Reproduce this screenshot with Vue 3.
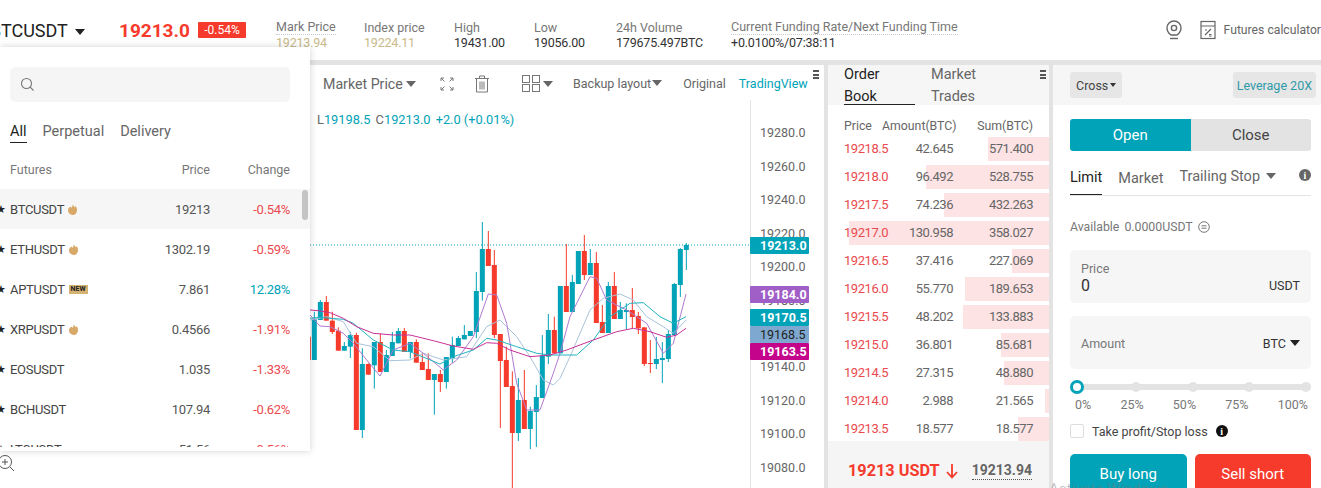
<script setup>
const stats = [
  { label: 'Mark Price', value: '19213.94', gold: true, dotted: true },
  { label: 'Index price', value: '19224.11', gold: true },
  { label: 'High', value: '19431.00' },
  { label: 'Low', value: '19056.00' },
  { label: '24h Volume', value: '179675.497BTC' },
  { label: 'Current Funding Rate/Next Funding Time', value: '+0.0100%/07:38:11', dotted: true }
];

const futures = [
  { name: 'BTCUSDT', tag: 'hot', price: '19213', change: '-0.54%', active: true },
  { name: 'ETHUSDT', tag: 'hot', price: '1302.19', change: '-0.59%' },
  { name: 'APTUSDT', tag: 'new', price: '7.861', change: '12.28%', up: true },
  { name: 'XRPUSDT', tag: 'hot', price: '0.4566', change: '-1.91%' },
  { name: 'EOSUSDT', price: '1.035', change: '-1.33%' },
  { name: 'BCHUSDT', price: '107.94', change: '-0.62%' },
  { name: 'LTCUSDT', price: '51.56', change: '-0.56%' }
];

const asks = [
  ['19218.5', '42.645', '571.400', 61],
  ['19218.0', '96.492', '528.755', 123],
  ['19217.5', '74.236', '432.263', 105],
  ['19217.0', '130.958', '358.027', 200],
  ['19216.5', '37.416', '227.069', 37],
  ['19216.0', '55.770', '189.653', 84],
  ['19215.5', '48.202', '133.883', 86],
  ['19215.0', '36.801', '85.681', 48],
  ['19214.5', '27.315', '48.880', 45],
  ['19214.0', '2.988', '21.565', 4],
  ['19213.5', '18.577', '18.577', 31]
];

const marks = ['0%', '25%', '50%', '75%', '100%'];

// candle values were read off a 3x crop, so convert them to chart pixels here
const CHART_TOP = 100;
const toY = (v) => 210 - CHART_TOP + v / 3;
const toX = (v) => 310 + v / 3;

// [x, bodyTop, bodyBottom, wickTop, wickBottom, up]
const rawCandles = [
  [-5, 380, 450, 370, 450, 0], [13, 328, 450, 305, 450, 1], [31, 276, 330, 270, 330, 1],
  [49, 276, 332, 258, 332, 0], [67, 332, 366, 305, 372, 0], [85, 362, 422, 352, 422, 0],
  [103, 408, 422, 396, 422, 1], [121, 375, 410, 365, 444, 1], [139, 375, 660, 368, 660, 0],
  [157, 462, 660, 415, 684, 1], [175, 462, 494, 460, 494, 0], [193, 396, 466, 396, 536, 1],
  [211, 396, 486, 370, 486, 0], [229, 435, 486, 420, 486, 1], [247, 396, 438, 366, 438, 1],
  [265, 363, 400, 354, 400, 1], [283, 363, 426, 354, 426, 0], [301, 396, 426, 396, 445, 1],
  [319, 396, 458, 388, 458, 0], [337, 456, 480, 430, 480, 0], [355, 477, 510, 430, 510, 0],
  [373, 492, 510, 492, 614, 1], [391, 492, 516, 480, 546, 0], [409, 441, 516, 441, 536, 1],
  [427, 405, 444, 380, 458, 1], [445, 384, 408, 378, 408, 1], [463, 375, 388, 345, 388, 1],
  [481, 363, 378, 363, 378, 1], [499, 243, 366, 186, 384, 1], [517, 117, 246, 36, 272, 1],
  [535, 117, 168, 63, 168, 0], [553, 165, 375, 120, 384, 0], [571, 372, 453, 372, 654, 0],
  [589, 450, 531, 410, 531, 0], [607, 528, 669, 484, 834, 0], [625, 570, 669, 504, 693, 1],
  [643, 570, 657, 480, 657, 0], [661, 603, 657, 590, 717, 1], [679, 561, 606, 525, 711, 1],
  [697, 437, 564, 375, 564, 1], [715, 360, 440, 312, 462, 1], [733, 360, 430, 320, 430, 0],
  [751, 228, 430, 228, 430, 1], [769, 228, 306, 102, 306, 0], [787, 216, 306, 195, 306, 1],
  [805, 123, 222, 123, 222, 1], [823, 123, 195, 75, 210, 0], [841, 159, 195, 117, 195, 1],
  [859, 159, 339, 126, 339, 0], [877, 336, 369, 285, 369, 0], [895, 228, 369, 216, 369, 1],
  [913, 228, 327, 186, 327, 0], [931, 300, 327, 276, 327, 1], [949, 300, 306, 280, 357, 1],
  [967, 300, 321, 234, 357, 0], [985, 318, 355, 306, 372, 0], [1003, 352, 462, 352, 468, 0],
  [1021, 459, 461, 390, 489, 0], [1039, 447, 462, 381, 477, 1], [1057, 444, 450, 396, 519, 1],
  [1075, 372, 447, 360, 456, 1], [1093, 222, 375, 219, 375, 1], [1111, 117, 225, 114, 261, 1],
  [1129, 105, 120, 99, 180, 1]
];

const candles = rawCandles.map(([x, top, bottom, wickTop, wickBottom, up]) => ({
  x: toX(x),
  top: toY(top),
  height: Math.max((bottom - top) / 3, 1),
  wickTop: toY(wickTop),
  wickBottom: toY(wickBottom),
  color: up ? '#00a3b8' : '#f63a2b'
}));

const line = (pts) => pts.map(([x, y]) => `${toX(x).toFixed(1)},${toY(y).toFixed(1)}`).join(' ');

const maLines = [
  {
    color: '#a9c3dc',
    points: line([[0, 330], [50, 320], [100, 335], [140, 400], [190, 410], [240, 452], [300, 450], [340, 430], [400, 450], [470, 440], [530, 350], [570, 330], [620, 380], [660, 440], [700, 510], [730, 525], [750, 505], [780, 440], [840, 300], [880, 265], [930, 252], [970, 270], [1010, 320], [1060, 350], [1090, 370], [1128, 330]])
  },
  {
    color: '#b07ad0',
    points: line([[0, 315], [30, 348], [60, 350], [100, 370], [130, 400], [170, 450], [210, 498], [250, 420], [300, 400], [340, 430], [400, 480], [440, 450], [490, 380], [535, 252], [560, 255], [590, 340], [620, 520], [650, 600], [690, 600], [730, 490], [750, 430], [780, 320], [840, 200], [860, 205], [890, 270], [950, 300], [1010, 340], [1060, 430], [1090, 400], [1128, 252]])
  },
  {
    color: '#21b3bf',
    points: line([[0, 325], [30, 322], [60, 325], [100, 328], [130, 340], [190, 390], [250, 420], [300, 425], [390, 462], [430, 440], [490, 420], [530, 385], [560, 390], [620, 410], [680, 430], [720, 435], [800, 435], [850, 390], [900, 320], [960, 280], [1000, 278], [1050, 320], [1090, 340], [1128, 320]])
  },
  {
    color: '#c9309a',
    points: line([[0, 300], [25, 302], [60, 308], [100, 325], [140, 350], [190, 370], [250, 375], [300, 375], [370, 392], [430, 408], [490, 418], [530, 398], [560, 400], [600, 420], [660, 440], [720, 435], [770, 420], [850, 390], [920, 365], [970, 355], [1020, 365], [1070, 382], [1100, 375], [1128, 355]])
  }
];

const axisLabels = [
  ['19280.0', 33], ['19260.0', 67], ['19240.0', 100], ['19220.0', 134], ['19200.0', 167],
  ['19180.0', 201], ['19140.0', 267], ['19120.0', 301], ['19100.0', 334], ['19080.0', 368]
];

const priceTags = [
  { text: '19213.0', y: 137, fill: '#00a3b8', color: '#fff', bold: true },
  { text: '19184.0', y: 186, fill: '#a05fc6', color: '#fff', bold: true },
  { text: '19170.5', y: 209, fill: '#00a3b8', color: '#fff', bold: true },
  { text: '19168.5', y: 226, fill: '#7ea8cf', color: '#222' },
  { text: '19163.5', y: 243, fill: '#c4058c', color: '#fff', bold: true }
];
</script>

<template>
  <div class="page">
    <header class="topbar">
      <div class="symbol">BTCUSDT <span class="caret caret-lg"></span></div>
      <div class="last-price">19213.0</div>
      <div class="last-change">-0.54%</div>
      <div class="stats">
        <div v-for="s in stats" :key="s.label" class="stat">
          <span class="stat-label" :class="{ dotted: s.dotted }">{{ s.label }}</span>
          <span class="stat-value" :class="{ gold: s.gold }">{{ s.value }}</span>
        </div>
      </div>
      <div class="top-actions">
        <svg class="pin" width="20" height="22" viewBox="0 0 20 22" fill="none" stroke="#666" stroke-width="1.4">
          <path d="M10 2a7 7 0 0 1 7 7c0 3-2 5.500-4 7H7c-2-1.500-4-4-4-7a7 7 0 0 1 7-7z" />
          <circle cx="10" cy="9" r="2.600" />
          <path d="M6 19.500h8" />
        </svg>
        <svg width="16" height="20" viewBox="0 0 16 20" fill="none" stroke="#666" stroke-width="1.200">
          <rect x="1" y="1.500" width="14" height="17" />
          <path d="M1 6h14M5 15l6-6M5 10h2M9 14.500h2.500M9 16h2.500" />
        </svg>
        <span class="calc">Futures calculator</span>
      </div>
    </header>

    <main class="workspace">
      <section class="chart-panel">
        <div class="chart-toolbar">
          <span class="tool-big">Market Price <span class="caret"></span></span>
          <svg class="tool-expand" width="14" height="14" viewBox="0 0 14 14" fill="none" stroke="#777" stroke-width="1">
            <path d="M1 4V1h3M1 1l3.500 3.500M10 1h3v3M13 1L9.500 4.500M1 10v3h3M1 13l3.500-3.500M13 10v3h-3M13 13L9.500 9.500" />
          </svg>
          <svg class="tool-trash" width="16" height="18" viewBox="0 0 16 18" fill="none" stroke="#777" stroke-width="1">
            <path d="M1 3.500h14M5.500 3.500V1h5v2.500M2.500 3.500V17h11V3.500M6 6.500v8M8 6.500v8M10 6.500v8" />
          </svg>
          <svg class="tool-layout" width="18" height="17" viewBox="0 0 18 17" fill="none" stroke="#777" stroke-width="1">
            <rect x="0.500" y="0.500" width="7" height="7" />
            <rect x="10.500" y="0.500" width="7" height="7" />
            <rect x="0.500" y="9.500" width="7" height="7" />
            <rect x="10.500" y="9.500" width="7" height="7" />
          </svg>
          <span class="caret tool-layout-caret"></span>
          <span class="tool-text tool-backup">Backup layout<span class="caret caret-tight"></span></span>
          <span class="tool-text tool-original">Original</span>
          <span class="tool-text tool-tv">TradingView</span>
          <span class="menu-dots tool-dots"><i></i><i></i><i></i></span>
        </div>
        <div class="chart-area">
          <svg class="chart" width="824" height="388" viewBox="0 0 824 388">
            <line x1="310" y1="145" x2="750" y2="145" stroke="#00a3b8" stroke-width="1" stroke-dasharray="1 2" />
            <line x1="750.500" y1="0" x2="750.500" y2="388" stroke="#e4e4e4" stroke-width="1" />
            <g v-for="(c, i) in candles" :key="i">
              <line :x1="c.x" :x2="c.x" :y1="c.wickTop" :y2="c.wickBottom" :stroke="c.color" stroke-width="1" />
              <rect :x="c.x - 2.500" :y="c.top" width="5" :height="c.height" :fill="c.color" />
            </g>
            <polyline v-for="m in maLines" :key="m.color" :points="m.points" fill="none" :stroke="m.color" stroke-width="1" />
            <text v-for="a in axisLabels" :key="a[0]" x="760" :y="a[1] + 4" class="axis-text">{{ a[0] }}</text>
            <g v-for="t in priceTags" :key="t.text">
              <rect x="750" :y="t.y" width="59" height="17" rx="1" :fill="t.fill" />
              <text x="760" :y="t.y + 13" class="tag-text" :class="{ 'tag-bold': t.bold }" :fill="t.color">{{ t.text }}</text>
            </g>
          </svg>
          <div class="legend"><span class="legend-k">L</span>19198.5 <span class="legend-k legend-gap">C</span>19213.0 <span class="legend-gap">+2.0 (+0.01%)</span></div>
          <svg class="zoom-icon" width="20" height="20" viewBox="0 0 20 20" fill="none" stroke="#555" stroke-width="1">
            <circle cx="5" cy="7" r="6.500" />
            <path d="M2 7h6M5 4v6M10 12l4 4" />
          </svg>
        </div>
      </section>

      <section class="book-panel">
        <div class="book-tabs">
          <div class="book-tab active">Order<br />Book</div>
          <div class="book-tab">Market<br />Trades</div>
          <span class="menu-dots book-dots"><i></i><i></i><i></i></span>
        </div>
        <div class="book-head">
          <span>Price</span>
          <span class="num">Amount(BTC)</span>
          <span class="num">Sum(BTC)</span>
        </div>
        <div class="book-rows">
          <div v-for="row in asks" :key="row[0]" class="book-row">
            <div class="depth" :style="{ width: row[3] + 'px' }"></div>
            <span class="ask">{{ row[0] }}</span>
            <span class="num">{{ row[1] }}</span>
            <span class="num">{{ row[2] }}</span>
          </div>
        </div>
        <div class="book-foot">
          <span class="foot-price">19213 USDT</span>
          <svg width="12" height="16" viewBox="0 0 12 16" fill="none" stroke="#f63a2b" stroke-width="1.800">
            <path d="M6 1v13M1 9l5 5.500L11 9" />
          </svg>
          <span class="foot-mark">19213.94</span>
        </div>
      </section>

      <section class="trade-panel">
        <div class="trade-top">
          <div class="cross">Cross<span class="caret caret-sm"></span></div>
          <div class="leverage">Leverage 20X</div>
        </div>
        <div class="trade-body">
          <div class="open-close">
            <div class="oc oc-open">Open</div>
            <div class="oc oc-close">Close</div>
          </div>
          <div class="order-tabs">
            <span class="order-tab active">Limit</span>
            <span class="order-tab">Market</span>
            <span class="order-tab trailing">Trailing Stop <span class="caret"></span></span>
            <span class="info info-gray">i</span>
          </div>
          <div class="available">
            <span>Available</span>
            <span>0.0000USDT</span>
            <svg width="12" height="12" viewBox="0 0 12 12" fill="none" stroke="#666" stroke-width="0.900">
              <circle cx="6" cy="6" r="5.300" />
              <path d="M3.500 4.800h5M3.500 7.200h5" />
            </svg>
          </div>
          <div class="field field-price">
            <div class="field-label">Price</div>
            <div class="field-row">
              <span class="field-value">0</span>
              <span class="field-unit">USDT</span>
            </div>
          </div>
          <div class="field field-amount">
            <span class="field-label">Amount</span>
            <span class="field-unit">BTC <span class="caret caret-dark"></span></span>
          </div>
          <div class="slider">
            <span class="knob"></span>
            <span class="stop"></span>
            <span class="stop"></span>
            <span class="stop"></span>
            <span class="stop"></span>
          </div>
          <div class="marks">
            <span v-for="m in marks" :key="m">{{ m }}</span>
          </div>
          <div class="tpsl">
            <span class="checkbox"></span>
            <span>Take profit/Stop loss</span>
            <span class="info info-dark">i</span>
          </div>
          <div class="actions">
            <div class="btn btn-buy">Buy long</div>
            <div class="btn btn-sell">Sell short</div>
          </div>
        </div>
      </section>
    </main>

    <!-- contract picker dropdown, sits over the chart -->
    <div class="picker">
      <div class="search">
        <svg width="15" height="15" viewBox="0 0 15 15" fill="none" stroke="#777" stroke-width="1.100">
          <circle cx="6.500" cy="6.500" r="5" />
          <path d="M10.200 10.200L13.500 13.500" />
        </svg>
      </div>
      <div class="picker-tabs">
        <span class="picker-tab active">All</span>
        <span class="picker-tab">Perpetual</span>
        <span class="picker-tab">Delivery</span>
      </div>
      <div class="picker-head">
        <span>Futures</span>
        <span class="right">Price</span>
        <span class="right">Change</span>
      </div>
      <div class="picker-list">
        <div v-for="f in futures" :key="f.name" class="picker-row" :class="{ active: f.active }">
          <span class="name">
            <span class="star">★</span>{{ f.name }}
            <svg v-if="f.tag === 'hot'" class="flame" width="9" height="11" viewBox="0 0 9 11">
              <path d="M4.800 0c.4 1.600 1.200 2.200 2 3.200.5-.4.600-.9.600-1.300C8.400 3 9 4.300 9 6c0 3-2 5-4.500 5S0 9 0 6.300C0 3.800 2.200 3 2.800 2.600c.2.500.3.900.7 1.200C4.300 3 4.900 1.500 4.800 0z" fill="#d8a868" />
            </svg>
            <span v-if="f.tag === 'new'" class="new-tag">NEW</span>
          </span>
          <span class="right price">{{ f.price }}</span>
          <span class="right" :class="f.up ? 'up' : 'down'">{{ f.change }}</span>
        </div>
      </div>
      <div class="scroll-thumb"></div>
    </div>

    <div class="watermark">Activate Windows</div>
  </div>
</template>

<style>
html, body, #app { margin: 0; padding: 0; height: 100%; overflow: hidden; background: #fff; }
</style>

<style scoped>
.page { position: relative; width: 1321px; height: 488px; overflow: hidden; background: #fff; font-family: Roboto, "Noto Sans", sans-serif; color: #555; }

.caret { display: inline-block; width: 0; height: 0; border-left: 5px solid transparent; border-right: 5px solid transparent; border-top: 6px solid #666; vertical-align: 2px; }
.caret-lg { border-top-color: #222; margin-left: 3px; }
.caret-sm { border-left-width: 3px; border-right-width: 3px; border-top-width: 4px; border-top-color: #333; margin-left: 2px; }
.caret-tight { margin-left: 1px; }
.caret-dark { border-top-color: #222; }

/* top bar */
.topbar { display: flex; align-items: center; height: 60px; }
.symbol { width: 129px; margin-left: -10px; flex: none; font-size: 18px; color: #222; white-space: nowrap; }
.last-price { font-size: 19px; font-weight: 700; color: #f63a2b; width: 79px; flex: none; }
.last-change { width: 48px; height: 16px; line-height: 16px; text-align: center; flex: none; background: #f63a2b; color: #fff; font-size: 12px; border-radius: 1px; }
.stats { display: grid; grid-template-columns: 88px 90px 80px 82px 115px auto; margin-left: 30px; margin-top: 10px; }
.stat { display: flex; flex-direction: column; font-size: 12.500px; line-height: 15px; }
.stat-label { color: #777; align-self: flex-start; white-space: nowrap; }
.stat-label.dotted { border-bottom: 1px dotted #ccc; line-height: 14px; }
.stat-value { color: #333; white-space: nowrap; letter-spacing: -0.200px; }
.stat-value.gold { color: #c9b98a; }
.top-actions { display: flex; align-items: center; margin-left: auto; gap: 16px; margin-right: 0; }
.calc { font-size: 12.200px; color: #666; margin-left: -8px; white-space: nowrap; }

/* main */
.workspace { display: grid; grid-template-columns: 824px 221px 268px; column-gap: 4px; height: 428px; background: #e3e3e3; padding-top: 5px; box-sizing: border-box; }

.chart-panel { background: #fff; }
.chart-toolbar { display: flex; align-items: center; height: 35px; box-sizing: border-box; padding: 2px 0 0 323px; position: relative; }
.tool-big { font-size: 14.200px; color: #666; white-space: nowrap; width: 117px; }
.tool-expand { margin-right: 20px; }
.tool-trash { margin-right: 32px; }
.tool-layout-caret { margin-left: 3px; margin-right: 20px; }
.tool-text { font-size: 12.500px; color: #666; white-space: nowrap; }
.tool-original { margin-left: 21px; }
.tool-tv { margin-left: 13px; color: #00a3b8; }
.menu-dots { display: flex; flex-direction: column; gap: 1.500px; width: 6px; }
.menu-dots i { display: block; height: 2px; background: #555; }
.tool-dots { position: absolute; top: 5px; left: 813px; }

.chart-area { position: relative; height: 388px; }
.chart { display: block; }
.axis-text { font-size: 12.500px; fill: #666; font-family: Roboto, sans-serif; }
.tag-text { font-size: 12.500px; font-family: Roboto, sans-serif; }
.tag-bold { font-weight: 700; }
.legend { position: absolute; left: 317px; top: 12px; font-size: 12.800px; color: #00a3b8; white-space: nowrap; }
.legend-k { color: #666; }
.legend-gap { margin-left: 2px; }
.zoom-icon { position: absolute; left: 0; top: 355px; }

/* order book */
.book-panel { background: #fff; display: flex; flex-direction: column; }
.book-tabs { position: relative; display: flex; height: 40px; background: #f6f6f6; padding-left: 16px; font-size: 14.500px; line-height: 22px; gap: 16px; box-sizing: border-box; }
.book-tab { width: 71px; color: #666; margin-top: -1px; height: 41px; }
.book-tab.active { color: #222; border-bottom: 1px solid #222; height: 40px; }
.book-dots { position: absolute; top: 5px; right: 3px; }
.book-head { display: grid; grid-template-columns: 38px 73px 78px; padding: 13px 16px 0; height: 17px; font-size: 12.300px; color: #666; line-height: 17px; white-space: nowrap; }
.num { text-align: right; }
.book-rows { display: flex; flex-direction: column; gap: 4px; margin-top: 2px; }
.book-row { position: relative; display: grid; grid-template-columns: 52px 57px 80px; padding: 0 16px; height: 24px; line-height: 24px; font-size: 13px; letter-spacing: -0.450px; color: #666; }
.book-row span { position: relative; }
.depth { position: absolute; top: 0; right: 0; bottom: 0; background: #fde3e3; }
.ask { color: #ea4a4f; }
.book-foot { display: flex; align-items: center; gap: 6px; height: 47px; background: #f5f5f5; padding: 12px 0 0 20px; box-sizing: border-box; }
.foot-price { font-size: 16.300px; font-weight: 700; color: #f63a2b; white-space: nowrap; }
.foot-mark { margin-left: 8px; font-size: 14px; font-weight: 700; color: #666; border-bottom: 1px dotted #555; line-height: 17px; }

/* trade form */
.trade-panel { background: #fff; }
.trade-top { display: flex; align-items: center; justify-content: space-between; height: 40px; background: #f6f6f6; padding: 0 5px 0 17px; box-sizing: border-box; }
.cross { display: flex; align-items: center; height: 26px; padding: 0 6px; background: #e6e6e6; border-radius: 3px; font-size: 12.500px; color: #444; }
.leverage { height: 26px; line-height: 27px; padding: 0 4px; background: #e6e6e6; border-radius: 3px; font-size: 12.500px; color: #2f9aa8; }
.trade-body { padding: 14px 10px 0 17px; }
.open-close { display: flex; height: 32px; border-radius: 3px; overflow: hidden; font-size: 15px; line-height: 32px; text-align: center; }
.oc { flex: 1; }
.oc-open { background: #00a3b8; color: #fff; }
.oc-close { background: #e3e3e3; color: #444; }
.order-tabs { display: flex; align-items: center; height: 44px; border-bottom: 1px solid #e3e3e3; font-size: 14.500px; color: #666; position: relative; }
.order-tab { height: 43px; line-height: 54px; margin-right: 16px; white-space: nowrap; }
.order-tab.active { color: #222; border-bottom: 1px solid #222; }
.order-tab.trailing { line-height: 50px; }
.order-tab.trailing .caret { margin-left: 2px; }
.info { position: absolute; display: flex; align-items: center; justify-content: center; border-radius: 50%; color: #fff; font-family: "Liberation Serif", serif; font-weight: 700; font-size: 10px; }
.info-gray { right: 0; top: 18px; width: 12px; height: 12px; background: #666; }
.available { display: flex; align-items: center; gap: 5px; height: 18px; margin-top: 22px; font-size: 12.300px; color: #777; }
.field { background: #f6f6f6; border-radius: 5px; padding: 0 11px; box-sizing: border-box; }
.field-price { margin-top: 14px; height: 53px; padding-top: 11px; }
.field-label { font-size: 12.500px; color: #777; line-height: 15px; }
.field-row { display: flex; justify-content: space-between; align-items: center; }
.field-value { font-size: 16px; color: #333; line-height: 19px; }
.field-unit { font-size: 12.500px; color: #333; white-space: nowrap; }
.field-amount { display: flex; justify-content: space-between; align-items: center; margin-top: 13px; height: 53px; padding-top: 1px; }
.field-amount .caret { margin-left: 1px; }
.slider { position: relative; display: flex; justify-content: space-between; align-items: center; height: 6px; margin-top: 15px; background: #e3e3e3; border-radius: 3px; }
.knob { width: 8px; height: 8px; border: 3px solid #00a3b8; background: #fff; border-radius: 50%; }
.stop { width: 10px; height: 10px; background: #e3e3e3; border-radius: 50%; }
.marks { display: flex; justify-content: space-between; margin-top: 7px; font-size: 12.500px; color: #777; line-height: 16px; padding: 0 3px 0 5px; }
.tpsl { display: flex; align-items: center; gap: 8px; margin-top: 11px; font-size: 12.500px; color: #444; height: 14px; }
.checkbox { width: 12px; height: 12px; border: 1px solid #ddd; border-radius: 2px; }
.info-dark { position: static; width: 12px; height: 12px; background: #111; }
.actions { display: flex; gap: 8px; margin-top: 16px; }
.btn { flex: 1; height: 40px; line-height: 40px; border-radius: 5px 5px 0 0; text-align: center; font-size: 15px; color: #fff; }
.btn-buy { background: #00a3b8; }
.btn-sell { background: #f63a2b; }

/* picker dropdown */
.picker { position: absolute; left: 0; top: 47px; width: 310px; height: 404px; background: #fff; box-shadow: 0 0 7px rgba(0, 0, 0, 0.18); overflow: hidden; }
.search { display: flex; align-items: center; margin: 20px 20px 0 10px; height: 35px; padding-left: 10px; background: #f5f5f5; border-radius: 5px; }
.picker-tabs { display: flex; gap: 16px; margin: 20px 0 0 10px; font-size: 14.500px; color: #666; height: 21px; }
.picker-tab { height: 20px; line-height: 20px; }
.picker-tab.active { color: #222; border-bottom: 1px solid #222; }
.picker-head, .picker-row { display: grid; grid-template-columns: 120px 80px 80px; padding-left: 10px; align-items: center; }
.picker-head { height: 30px; margin-top: 11px; color: #777; font-size: 12.500px; }
.picker-list { margin-top: 5px; height: 258px; overflow: hidden; }
.picker-row { height: 40px; color: #555; white-space: nowrap; font-size: 13px; letter-spacing: -0.300px; }
.picker-row.active { background: #f6f6f6; }
.right { text-align: right; }
.name { position: relative; display: flex; align-items: center; gap: 4px; color: #444; }
.star { position: absolute; left: -14px; color: #222; font-size: 11px; }
.new-tag { background: #d4b273; color: #222; font-size: 7px; font-weight: 700; line-height: 9px; padding: 0 2px; letter-spacing: 0; }
.up { color: #00a3b8; }
.down { color: #ea4a4f; }
.scroll-thumb { position: absolute; left: 302px; top: 143px; width: 6px; height: 30px; border-radius: 3px; background: #c4c4c4; }

.watermark { position: absolute; left: 1049px; top: 480px; font-size: 15px; color: rgba(120, 120, 120, 0.45); white-space: nowrap; pointer-events: none; }
</style>
